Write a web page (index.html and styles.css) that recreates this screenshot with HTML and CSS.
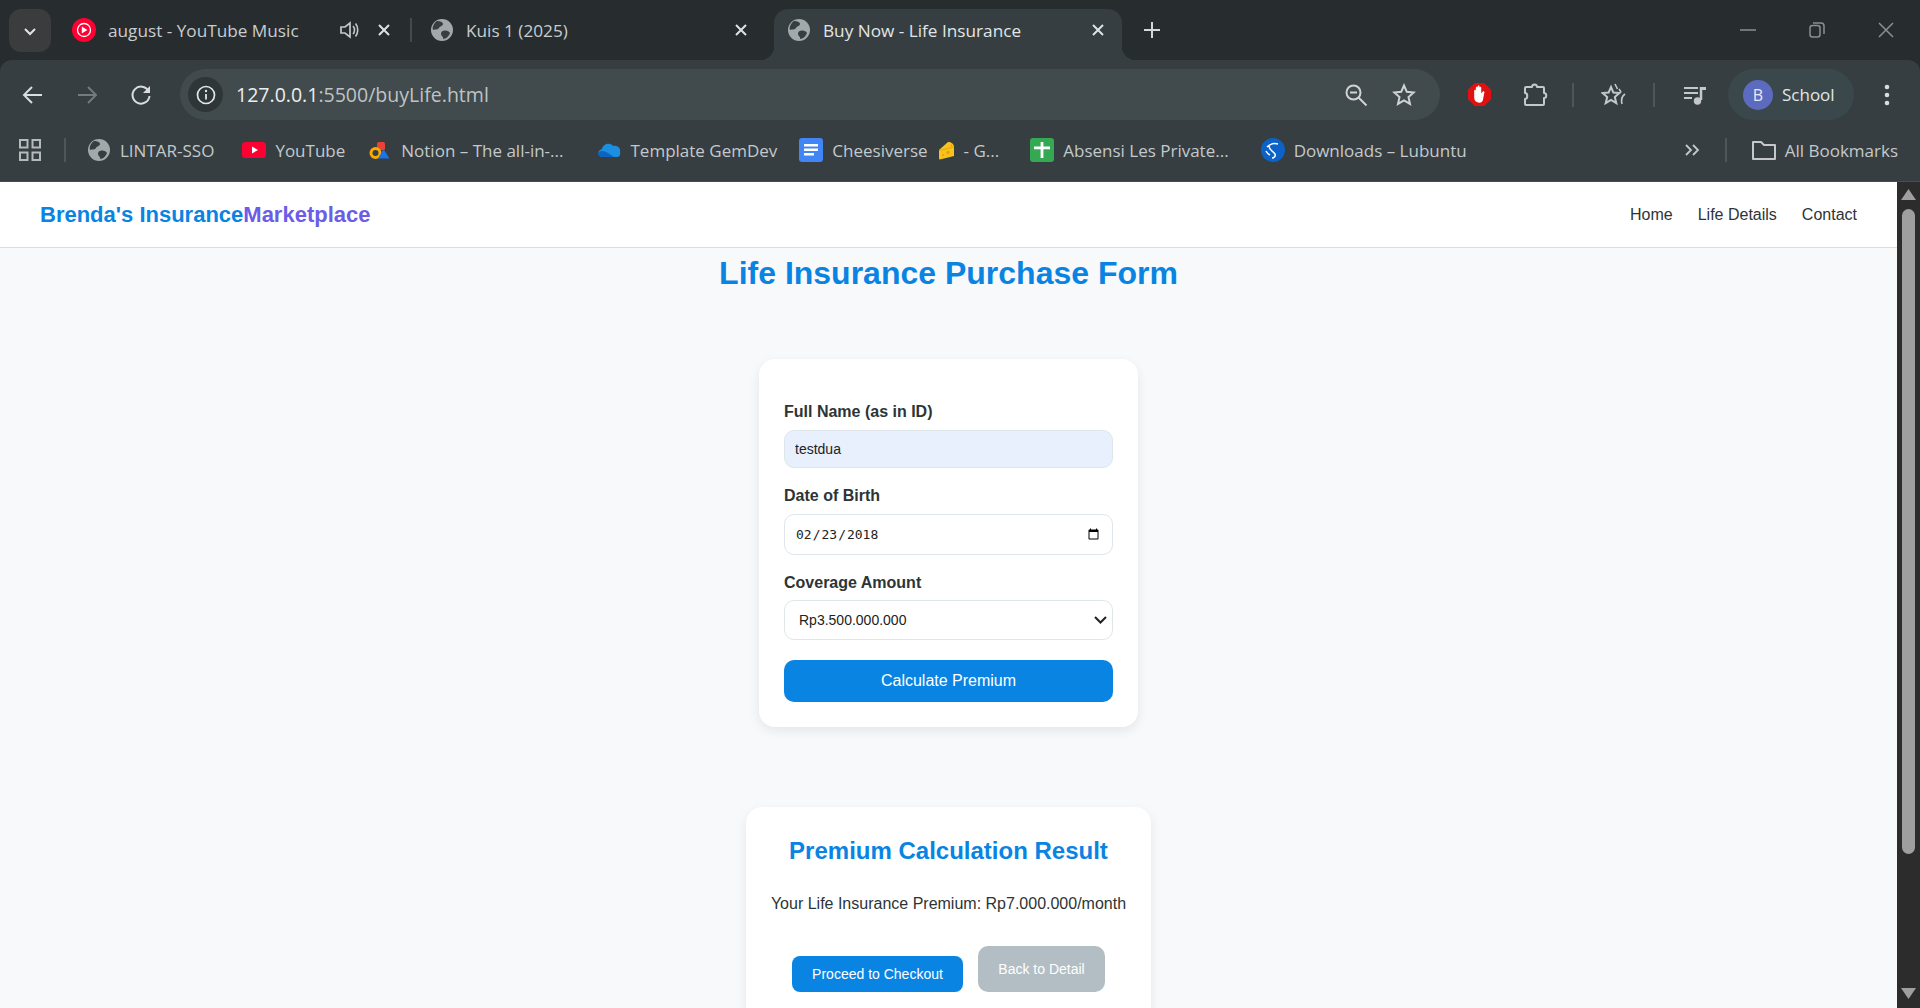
FILE: index.html
```html
<!DOCTYPE html>
<html>
<head>
    <title>Buy Now - Life Insurance</title>
    <link rel="stylesheet" href="styles.css">
</head>
<body>
    <svg class="defs" width="0" height="0">
        <symbol id="globe" viewBox="0 0 24 24">
            <circle cx="12" cy="12" r="11" fill="#a3a8ab"/>
            <path d="M7 3c3 0 6 1 6 3s-3 2-4 4-4 1-6 2c-1-3 1-7 4-9zM13 13c3-1 6 0 7 2-1 3-4 6-7 6 1-2-2-3-2-5s1-3 2-3z" fill="#363e41"/>
        </symbol>
        <symbol id="close" viewBox="0 0 16 16">
            <path d="M3 3l10 10M13 3L3 13" stroke="#dfe2e3" stroke-width="2" fill="none"/>
        </symbol>
    </svg>

    <div class="browser">
        <div class="tabstrip">
            <div class="expander">
                <svg width="14" height="14" viewBox="0 0 14 14"><path d="M2 5l5 5 5-5" stroke="#e3e3e3" stroke-width="2" fill="none"/></svg>
            </div>

            <div class="tab tab-music">
                <svg class="favicon" viewBox="0 0 24 24"><circle cx="12" cy="12" r="12" fill="#ff0033"/><circle cx="12" cy="12" r="6.5" fill="none" stroke="#fff" stroke-width="1.3"/><path d="M9.8 8.5v7l5.6-3.5z" fill="#fff"/></svg>
                <span class="tab-title">august - YouTube Music</span>
                <svg class="speaker" width="22" height="22" viewBox="0 0 22 22"><path d="M3 8h4l5-4v14l-5-4H3z" fill="none" stroke="#c4c8ca" stroke-width="1.7"/><path d="M15 7c2 2 2 6 0 8M17.500 4.500c3 3.500 3 9.500 0 13" fill="none" stroke="#c4c8ca" stroke-width="1.6"/></svg>
                <svg class="tab-close"><use href="#close"/></svg>
            </div>
            <div class="tab tab-kuis">
                <svg class="favicon"><use href="#globe"/></svg>
                <span class="tab-title">Kuis 1 (2025)</span>
                <svg class="tab-close"><use href="#close"/></svg>
            </div>
            <div class="tab tab-active">
                <svg class="favicon"><use href="#globe"/></svg>
                <span class="tab-title">Buy Now - Life Insurance</span>
                <svg class="tab-close"><use href="#close"/></svg>
            </div>
            <svg class="new-tab" width="18" height="18" viewBox="0 0 18 18"><path d="M9 1v16M1 9h16" stroke="#d5d8d9" stroke-width="2"/></svg>

            <div class="window-controls">
                <span class="win-btn"><svg width="16" height="16" viewBox="0 0 16 16"><path d="M0 8h16" stroke="#8b9092" stroke-width="1.5"/></svg></span>
                <span class="win-btn"><svg width="16" height="16" viewBox="0 0 16 16"><rect x="1" y="3.500" width="10" height="11.500" rx="2.500" fill="none" stroke="#8b9092" stroke-width="1.500"/><path d="M4 1h8c2 0 3 1 3 3v8" fill="none" stroke="#8b9092" stroke-width="1.500"/></svg></span>
                <span class="win-btn"><svg width="16" height="16" viewBox="0 0 16 16"><path d="M1 1l14 14M15 1L1 15" stroke="#8b9092" stroke-width="1.500"/></svg></span>
            </div>
        </div>

        <div class="chrome">
            <div class="toolbar">
                <span class="nav-btn"><svg width="22" height="22" viewBox="0 0 22 22"><path d="M20 11H3M10 3l-8 8 8 8" stroke="#dadcdd" stroke-width="2" fill="none"/></svg></span>
                <span class="nav-btn"><svg width="22" height="22" viewBox="0 0 22 22"><path d="M2 11h17M12 3l8 8-8 8" stroke="#757a7c" stroke-width="2" fill="none"/></svg></span>
                <span class="nav-btn"><svg width="22" height="22" viewBox="0 0 22 22"><path d="M18.500 7A8.500 8.500 0 1 0 19.500 12" stroke="#dadcdd" stroke-width="2" fill="none"/><path d="M20 2v7h-7z" fill="#dadcdd"/></svg></span>

                <div class="omnibox">
                    <span class="site-info"><svg width="20" height="20" viewBox="0 0 20 20"><circle cx="10" cy="10" r="8.500" fill="none" stroke="#e3e5e6" stroke-width="1.700"/><path d="M10 9v5.500" stroke="#e3e5e6" stroke-width="1.800"/><circle cx="10" cy="6" r="1.200" fill="#e3e5e6"/></svg></span>
                    <span class="url"><span class="url-host">127.0.0.1</span>:5500/buyLife.html</span>
                    <svg class="omni-zoom" width="24" height="24" viewBox="0 0 24 24"><circle cx="9.500" cy="9.500" r="7" fill="none" stroke="#d0d3d4" stroke-width="2"/><path d="M6 9.500h7M14.500 14.500l8 8" stroke="#d0d3d4" stroke-width="2"/></svg>
                    <svg class="omni-star" width="24" height="24" viewBox="0 0 24 24"><path d="M12 2.500l2.800 6.300 6.900.7-5.200 4.600 1.500 6.800-6-3.500-6 3.500 1.500-6.800-5.200-4.600 6.900-.7z" fill="none" stroke="#d0d3d4" stroke-width="2"/></svg>
                </div>

                <svg class="ext-block" width="25" height="25" viewBox="0 0 26 26"><path d="M8 1h10l7 7v10l-7 7H8l-7-7V8z" fill="#e21111"/><path d="M7.500 12.500V9c0-1.200 1.700-1.200 1.700 0V6c0-1.300 1.800-1.300 1.800 0V4.500c0-1.300 2-1.300 2 0V6c0-1.300 1.800-1.300 1.800 0v6l1.600-2c.9-.9 2.200 0 1.600 1.200L16.500 19c-.7 1.700-1.600 2.500-3.500 2.500-3.500 0-5.500-2-5.500-5z" fill="#fff"/></svg>
                <svg class="ext-puzzle" width="26" height="26" viewBox="0 0 26 26"><path d="M4 5h6c0-3.500 5-3.500 5 0h6c1 0 1 1 1 1v5c3 0 3 5 0 5v6c0 1-1 1-1 1H4c-1 0-1-1-1-1v-5c3 0 3-6 0-6V6c0-1 1-1 1-1z" fill="none" stroke="#c4c8ca" stroke-width="2" stroke-linejoin="round"/></svg>
                <span class="tool-sep sep-one"></span>
                <svg class="ext-stars" width="26" height="24" viewBox="0 0 26 24"><path d="M10 4l2.400 5.600 6 .5-4.600 4 1.500 6L10 17l-5.300 3.100 1.500-6-4.600-4 6-.5z" fill="none" stroke="#c4c8ca" stroke-width="2"/><path d="M14 1l2.500 5M18 6l2 3M24 11c-3 2-4 6-3 10" fill="none" stroke="#c4c8ca" stroke-width="1.600"/></svg>
                <span class="tool-sep sep-two"></span>
                <svg class="ext-queue" width="24" height="24" viewBox="0 0 24 24"><path d="M1 5h14M1 10h14M1 15h8" stroke="#c4c8ca" stroke-width="2"/><path d="M18 4v13" stroke="#c4c8ca" stroke-width="2.500"/><path d="M18 4h5v3h-5z" fill="#c4c8ca"/><circle cx="14.500" cy="18" r="3.700" fill="#c4c8ca"/></svg>

                <div class="profile">
                    <span class="avatar">B</span>
                    <span class="profile-name">School</span>
                </div>
                <svg class="menu-dots" width="6" height="22" viewBox="0 0 6 22"><circle cx="3" cy="3" r="2.300" fill="#dadcdd"/><circle cx="3" cy="11" r="2.300" fill="#dadcdd"/><circle cx="3" cy="19" r="2.300" fill="#dadcdd"/></svg>
            </div>

            <div class="bookmarks">
                <svg class="apps" width="22" height="22" viewBox="0 0 22 22"><path d="M1 1h7.500v7.500H1zM13.500 1H21v7.500h-7.500zM1 13.500h7.500V21H1zM13.500 13.500H21V21h-7.500z" fill="none" stroke="#b6babc" stroke-width="2"/></svg>
                <span class="bm-sep"></span>

                <span class="bm bm-lintar"><svg class="bm-icon"><use href="#globe"/></svg>LINTAR-SSO</span>
                <span class="bm bm-yt"><svg class="bm-icon" viewBox="0 0 24 24"><rect y="4" width="24" height="16" rx="3.500" fill="#ff0033"/><path d="M10 8.500v7l6-3.500z" fill="#fff"/></svg>YouTube</span>
                <span class="bm bm-notion"><svg class="bm-icon" viewBox="0 0 24 24"><rect x="9" y="4" width="8" height="8" rx="1.500" fill="#ea4335"/><circle cx="7.500" cy="15" r="4.500" fill="none" stroke="#f9ab00" stroke-width="3"/><path d="M15.500 11l6 9.500h-11.500z" fill="#1a73e8"/></svg>Notion – The all-in-...</span>
                <span class="bm bm-drive"><svg class="bm-icon" viewBox="0 0 24 24"><path d="M6 19c-6 0-6-7-1-8 1-5 8-7 11-3 4-1 8 2 7 6 1 3-1 5-3 5z" fill="#1d8fe0"/><path d="M6 19c-3 0-5-2-5-4 3-3 6-2 10 0l6 4z" fill="#0c64c0"/></svg>Template GemDev</span>
                <span class="bm bm-docs"><svg class="bm-icon" viewBox="0 0 24 24"><rect width="24" height="24" rx="3" fill="#4285f4"/><path d="M5 6h14v2.500H5zM5 10.500h14V13H5zM5 15h10v2.500H5z" fill="#fff"/></svg>Cheesiverse<svg class="cheese" width="17" height="19" viewBox="0 0 17 19"><path d="M1 9L10 1c3-.5 6 2 6 5v9L2 18.500c-1 0-1-1-1-2z" fill="#fcc21b"/><path d="M1 9.500L16 6" stroke="#e2a610" stroke-width="1"/><circle cx="10" cy="11.500" r="1.800" fill="#e2a610"/><circle cx="5" cy="14" r="1.100" fill="#e2a610"/><circle cx="13.500" cy="4.500" r=".9" fill="#e2a610"/></svg>- G...</span>
                <span class="bm bm-sheets"><svg class="bm-icon" viewBox="0 0 24 24"><rect width="24" height="24" rx="3" fill="#34a853"/><path d="M4 8.500h16v2.800H4zM10.600 4h2.800v16h-2.800z" fill="#fff"/></svg>Absensi Les Private...</span>
                <span class="bm bm-lubuntu"><svg class="bm-icon" viewBox="0 0 24 24"><circle cx="12" cy="12" r="12" fill="#0c62c7"/><path d="M6 9c3-3 7-4 11-3M8 8c0 4 4 5 6 8 1 2-1 4-3 4M5 13c1 2 2 3 4 4" fill="none" stroke="#fff" stroke-width="1.500"/></svg>Downloads – Lubuntu</span>

                <svg class="bm-more" width="16" height="14" viewBox="0 0 16 14"><path d="M2 2l5 5-5 5M9 2l5 5-5 5" stroke="#c4c8ca" stroke-width="1.800" fill="none"/></svg>
                <span class="bm-sep bm-sep-end"></span>
                <span class="bm bm-all"><svg class="bm-icon" viewBox="0 0 24 24"><path d="M1 4h8l3 3h11v14H1z" fill="none" stroke="#c4c8ca" stroke-width="2" stroke-linejoin="round"/></svg>All Bookmarks</span>
            </div>
        </div>

        <div class="viewport">
            <div class="page">
                <nav class="navbar">
                    <div class="logo">Brenda's Insurance<span class="logo-accent">Marketplace</span></div>
                    <ul class="nav-links">
                        <li><a href="#">Home</a></li>
                        <li><a href="#">Life Details</a></li>
                        <li><a href="#">Contact</a></li>
                    </ul>
                </nav>

                <main class="content">
                    <h1>Life Insurance Purchase Form</h1>

                    <form class="form-card">
                        <label for="fullname">Full Name (as in ID)</label>
                        <input type="text" id="fullname" class="autofilled" value="testdua">

                        <label for="dob">Date of Birth</label>
                        <input type="date" id="dob" value="2018-02-23">

                        <label for="coverage">Coverage Amount</label>
                        <select id="coverage">
                            <option>Rp3.500.000.000</option>
                        </select>

                        <button type="button" class="btn-calc">Calculate Premium</button>
                    </form>

                    <section class="result-card">
                        <h2>Premium Calculation Result</h2>
                        <p>Your Life Insurance Premium: Rp7.000.000/month</p>
                        <div class="result-actions">
                            <button type="button" class="btn-checkout">Proceed to Checkout</button>
                            <button type="button" class="btn-back">Back to Detail</button>
                        </div>
                    </section>
                </main>
            </div>

            <div class="scrollbar">
                <svg class="scroll-arrow" width="15" height="11" viewBox="0 0 15 11"><path d="M7.500 0L15 11H0z" fill="#9f9f9f"/></svg>
                <div class="scroll-thumb"></div>
                <svg class="scroll-arrow scroll-down" width="15" height="11" viewBox="0 0 15 11"><path d="M7.500 11L15 0H0z" fill="#9f9f9f"/></svg>
            </div>
        </div>
    </div>
</body>
</html>
```

FILE: styles.css
```css
* {
    box-sizing: border-box;
}

html, body {
    margin: 0;
    height: 100%;
    overflow: hidden;
}

body {
    font-family: "Liberation Sans", Arial, sans-serif;
    background: #272c2f;
}

.defs {
    position: absolute;
}

.browser {
    display: flex;
    flex-direction: column;
    height: 100vh;
}

/* tab strip */
.tabstrip {
    display: flex;
    align-items: flex-end;
    height: 60px;
    padding-left: 9px;
    background: #272c2f;
    font-family: "Open Sans", sans-serif;
    font-size: 17.2px;
    color: #c9cdcf;
}

.expander {
    display: flex;
    align-items: center;
    justify-content: center;
    width: 42px;
    height: 43px;
    margin-right: 9px;
    margin-bottom: 8px;
    border-radius: 12px;
    background: #3a3c3d;
}

.tab {
    display: flex;
    align-items: center;
    gap: 12px;
    height: 51px;
    padding-bottom: 9px;
}

.favicon {
    width: 24px;
    height: 24px;
    flex-shrink: 0;
}

.tab-title {
    flex: 1;
    white-space: nowrap;
}

.tab-close {
    width: 16px;
    height: 16px;
}

.speaker {
    margin-right: 4px;
}

.tab-music {
    position: relative;
    width: 352px;
    padding-left: 12px;
    padding-right: 20px;
}

.tab-music::after {
    content: "";
    position: absolute;
    right: 0;
    top: 9px;
    width: 2px;
    height: 24px;
    background: #44494b;
}

.tab-kuis {
    width: 362px;
    padding-left: 18px;
    padding-right: 25px;
}

.tab-active {
    position: relative;
    width: 348px;
    padding-left: 13px;
    padding-right: 16px;
    border-radius: 14px 14px 0 0;
    background: #363e41;
    color: #e3e5e6;
}

.tab-active::before,
.tab-active::after {
    content: "";
    position: absolute;
    bottom: 0;
    width: 14px;
    height: 14px;
}

.tab-active::before {
    left: -14px;
    background: radial-gradient(circle at 0 0, transparent 14px, #363e41 14.5px);
}

.tab-active::after {
    right: -14px;
    background: radial-gradient(circle at 100% 0, transparent 14px, #363e41 14.5px);
}

.new-tab {
    margin-left: 21px;
    margin-bottom: 21px;
}

.window-controls {
    display: flex;
    align-self: stretch;
    margin-left: auto;
}

.win-btn {
    display: flex;
    align-items: center;
    justify-content: center;
    width: 69px;
}

/* toolbar + bookmarks */
.chrome {
    height: 122px;
    border-radius: 12px 12px 0 0;
    border-bottom: 1px solid #484d4f;
    background: #363e41;
    font-family: "Open Sans", sans-serif;
    color: #c9cdcf;
}

.toolbar {
    display: flex;
    align-items: center;
    height: 60px;
    padding-top: 9px;
    padding-left: 6px;
}

.nav-btn {
    display: flex;
    justify-content: center;
    width: 54px;
}

.omnibox {
    display: flex;
    align-items: center;
    width: 1260px;
    height: 51px;
    margin-left: 12px;
    padding-left: 8px;
    border-radius: 26px;
    background: #414a4c;
}

.site-info {
    display: flex;
    align-items: center;
    justify-content: center;
    width: 35px;
    height: 35px;
    border-radius: 50%;
    background: #2f3638;
}

.url {
    margin-left: 13px;
    font-size: 19.55px;
    white-space: nowrap;
    color: #bfc3c5;
}

.url-host {
    color: #eceeee;
}

.omni-zoom {
    margin-left: auto;
}

.omni-star {
    margin-left: 24px;
    margin-right: 24px;
}

.ext-block {
    margin-left: 27px;
}

.ext-puzzle {
    margin-left: 30px;
}

.tool-sep {
    width: 2px;
    height: 24px;
    background: #4e5659;
}

.sep-one {
    margin-left: 24px;
}

.ext-stars {
    margin-left: 27px;
}

.sep-two {
    margin-left: 26px;
}

.ext-queue {
    margin-left: 28px;
}

.profile {
    display: flex;
    align-items: center;
    width: 126px;
    height: 51px;
    margin-left: 21px;
    padding-left: 15px;
    border-radius: 26px;
    background: #3a484c;
}

.avatar {
    display: flex;
    align-items: center;
    justify-content: center;
    width: 30px;
    height: 30px;
    border-radius: 50%;
    background: #5c6bc0;
    color: #e8eaf6;
    font-size: 16px;
}

.profile-name {
    margin-left: 9px;
    font-size: 17px;
    color: #e3e5e6;
}

.menu-dots {
    margin-left: 30px;
}

.bookmarks {
    display: flex;
    align-items: center;
    height: 60px;
    padding-left: 19px;
    font-size: 17px;
    color: #c4c9cb;
}

.bm-sep {
    width: 2px;
    height: 24px;
    margin-left: 23px;
    background: #4e5659;
}

.bm {
    display: flex;
    align-items: center;
    gap: 9px;
    white-space: nowrap;
}

.bm-icon {
    width: 24px;
    height: 24px;
    flex-shrink: 0;
}

.cheese {
    margin: 0 0 0 1px;
}

.bm-lintar { margin-left: 21px; }
.bm-yt { margin-left: 28px; }
.bm-notion { margin-left: 23px; }
.bm-drive { margin-left: 34px; }
.bm-docs { margin-left: 22px; }
.bm-sheets { margin-left: 31px; }
.bm-lubuntu { margin-left: 32px; }

.bm-more {
    margin-left: auto;
}

.bm-sep-end {
    margin-left: 25px;
}

.bm-all {
    margin-left: 25px;
    margin-right: 22px;
}

/* page */
.viewport {
    display: flex;
    flex: 1;
    min-height: 0;
}

.page {
    flex: 1;
    overflow: hidden;
    background: #f8f9fa;
}

.navbar {
    display: flex;
    align-items: center;
    justify-content: space-between;
    height: 66px;
    padding: 0 40px;
    border-bottom: 1px solid #dddddd;
    background: #fff;
}

.logo {
    font-size: 22px;
    font-weight: bold;
    color: #0984e3;
}

.logo-accent {
    color: #6c5ce7;
}

.nav-links {
    display: flex;
    gap: 25px;
    margin: 0;
    padding: 0;
    list-style: none;
}

.nav-links a {
    font-size: 16px;
    color: #2d3436;
    text-decoration: none;
}

.content {
    display: flex;
    flex-direction: column;
    align-items: center;
}

h1 {
    margin: 7px 0 67px;
    font-size: 32px;
    color: #0984e3;
}

.form-card {
    width: 379px;
    padding: 44px 25px 25px;
    border-radius: 16px;
    background: #fff;
    box-shadow: 0 4px 12px rgba(0, 0, 0, 0.08);
}

.form-card label {
    display: block;
    margin-bottom: 9px;
    font-size: 16px;
    font-weight: bold;
    color: #2d3436;
}

.form-card input,
.form-card select {
    display: block;
    width: 100%;
    border: 1px solid #dfe6e9;
    border-radius: 10px;
    background-color: #fff;
    font-size: 14px;
    color: #222;
}

.form-card input {
    margin-bottom: 19px;
    padding: 0 10px;
}

.autofilled {
    height: 38px;
    font-family: "Liberation Sans", Arial, sans-serif;
    background-color: #e8f0fe !important;
}

#dob {
    height: 41px;
    font-size: 13px;
}

.form-card select {
    height: 40px;
    margin-top: -1px;
    padding: 0 14px;
    appearance: none;
    font-family: "Liberation Sans", Arial, sans-serif;
    background-image: url("data:image/svg+xml,%3Csvg xmlns='http://www.w3.org/2000/svg' width='13' height='8' viewBox='0 0 13 8'%3E%3Cpath d='M1 1l5.500 5.500L12 1' stroke='%23222' stroke-width='2' fill='none'/%3E%3C/svg%3E");
    background-repeat: no-repeat;
    background-position: right 5px center;
}

.btn-calc {
    display: block;
    width: 100%;
    height: 42px;
    margin-top: 20px;
    border: none;
    border-radius: 10px;
    background: #0984e3;
    color: #fff;
    font-family: "Liberation Sans", Arial, sans-serif;
    font-size: 16px;
}

.result-card {
    margin-top: 80px;
    padding: 30px 25px 40px;
    border-radius: 16px;
    background: #fff;
    box-shadow: 0 4px 12px rgba(0, 0, 0, 0.08);
    text-align: center;
}

.result-card h2 {
    margin: 0 0 30px;
    font-size: 24px;
    color: #0984e3;
}

.result-card p {
    margin: 0 0 33px;
    font-size: 16px;
    color: #2d3436;
}

.result-actions {
    display: flex;
    align-items: flex-end;
    justify-content: center;
    gap: 15px;
}

.result-actions button {
    border: none;
    color: #fff;
    font-family: "Liberation Sans", Arial, sans-serif;
    font-size: 14px;
}

.btn-checkout {
    width: 171px;
    height: 36px;
    border-radius: 8px;
    background: #0984e3;
}

.btn-back {
    width: 127px;
    height: 46px;
    border-radius: 10px;
    background: #b2bec3;
}

/* scrollbar */
.scrollbar {
    display: flex;
    flex-direction: column;
    align-items: center;
    width: 23px;
    padding-top: 7px;
    background: #2c2c2c;
}

.scroll-thumb {
    width: 13px;
    height: 645px;
    margin-top: 9px;
    border-radius: 7px;
    background: #9f9f9f;
}

.scroll-down {
    margin-top: auto;
    margin-bottom: 9px;
}
```
